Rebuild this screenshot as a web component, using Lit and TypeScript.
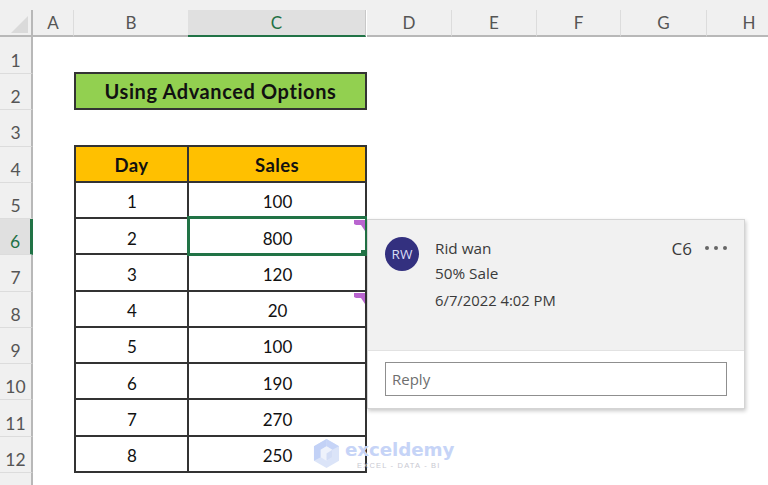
import { LitElement, html, css, svg } from "lit";
import { customElement } from "lit/decorators.js";

const cols = ["A", "B", "C", "D", "E", "F", "G", "H"];
const rows = [1, 2, 3, 4, 5, 6, 7, 8, 9, 10, 11, 12];
const data: [string, string][] = [
  ["1", "100"], ["2", "800"], ["3", "120"], ["4", "20"],
  ["5", "100"], ["6", "190"], ["7", "270"], ["8", "250"],
];

@customElement("app-root")
export class AppRoot extends LitElement {
  static styles = css`
    :host { display: block; width: 768px; height: 485px; overflow: hidden; position: relative; background: #fff; font-family: Lato, "Liberation Sans", sans-serif; color: #111; }
    .strip { height: 10px; background: #f0f0f0; }
    .sheet { display: grid; grid-template-columns: 33px 41px 115px 178px 85px 85px 84px 86px 85px; grid-template-rows: 27px 37px repeat(11, 36.27px) 13px; }
    .corner { background: #f0f0f0; border-right: 2px solid #b8b8b8; border-bottom: 2px solid #b8b8b8; position: relative; }
    .corner svg { position: absolute; left: 11px; top: 6px; }
    .ch { background: #f0f0f0; border-bottom: 2px solid #b8b8b8; border-right: 1px solid #dcdcdc; display: flex; align-items: center; justify-content: center; font-size: 17px; color: #555; box-sizing: border-box; }
    .ch.on { background: #e0e0e0; color: #1f7145; border-bottom: 2px solid #217346; border-right: 1px solid #c8c8c8; margin: 0 1px 0 -1px; }
    .rh { grid-column: 1; background: #f0f0f0; border-right: 2px solid #b8b8b8; border-bottom: 1px solid #dcdcdc; display: flex; align-items: center; justify-content: center; font-size: 17.5px; color: #555; box-sizing: border-box; padding-top: 10px; }
    .rh.on { background: #e0e0e0; color: #1f7145; border-right: 3px solid #217346; }
    .cell { display: flex; align-items: center; justify-content: center; font-size: 17px; box-sizing: border-box; border-right: 2px solid #333; border-bottom: 2px solid #333; padding: 4px 0 0 1px; color: #111; }
    .cell.b { grid-column: 3; border-left: 2px solid #333; }
    .cell.c { grid-column: 4; position: relative; }
    .head { background: #ffc000; font-weight: 700; font-size: 18.5px; letter-spacing: 0.4px; border-top: 2px solid #333; margin-top: -2px; padding: 2px 0 0 0; }
    .banner { grid-column: 3 / 5; grid-row: 3; display: flex; align-items: center; justify-content: center; background: #92d050; border: 2px solid #333; font-weight: 700; font-size: 20px; color: #111; box-sizing: border-box; letter-spacing: 0.6px; margin-top: -2px; }
    .cell.sel::after { content: ""; position: absolute; inset: -3px -2px -3px -2px; border: solid #217346; border-width: 3px 2px 3px 3px; z-index: 1; }
    .handle { position: absolute; right: -2px; bottom: -3px; width: 6px; height: 6px; background: #217346; z-index: 2; }
    .flag { position: absolute; right: 0; top: 1px; z-index: 2; }
    .card { position: absolute; left: 367px; top: 219px; width: 378px; height: 190px; box-sizing: border-box; background: #fff; border: 1px solid #d4d4d4; box-shadow: 1px 2px 4px rgba(0,0,0,.22); display: flex; flex-direction: column; font-family: "Open Sans", "Noto Sans", sans-serif; z-index: 3; }
    .top { flex: 0 0 131px; background: #f1f1f1; border-bottom: 1px solid #e2e2e2; display: flex; padding: 17px 17px 0 17px; gap: 16px; box-sizing: border-box; }
    .avatar { width: 34px; height: 34px; border-radius: 50%; background: #33307f; color: #d8dcf4; display: flex; align-items: center; justify-content: center; font-size: 13.5px; flex: none; }
    .body { flex: 1; display: flex; flex-direction: column; font-size: 15.3px; color: #3a3a3a; line-height: 25px; margin-top: -1px; }
    .name { display: flex; align-items: center; }
    .ref { margin-left: auto; font-size: 17px; }
    .dots { display: flex; gap: 5px; margin: -2px 0 0 13px; }
    .dots i { width: 4px; height: 4px; border-radius: 50%; background: #666; }
    .date { font-size: 14.8px; margin-top: 2px; }
    .foot { flex: 1; display: flex; padding: 11px 17px 0; }
    .reply { flex: 1; height: 34px; box-sizing: border-box; border: 1px solid #8f8f8f; padding-left: 6px; font-size: 15px; line-height: 33px; color: #6e6e6e; }
    .mark { position: absolute; left: 313px; top: 438px; display: flex; gap: 5px; z-index: 2; }
    .word { display: flex; flex-direction: column; align-items: flex-start; font-family: "DejaVu Sans", sans-serif; padding-top: 2px; }
    .word b { font-size: 18.3px; line-height: 20px; color: #c6d4f7; font-weight: 700; letter-spacing: -.1px; }
    .word span { margin: 1px 0 0 12px; font-size: 7.5px; line-height: 9px; letter-spacing: 1.2px; color: #c9c9d2; font-family: "Liberation Sans", sans-serif; white-space: nowrap; }
  `;

  render() {
    const flag = svg`<path d="M0 0H11V11L7 5H2L0 4Z" fill="#b965cf"/>`;
    return html`
      <div class="strip"></div>
      <div class="sheet">
        <div class="corner"><svg width="17" height="17"><path d="M17 0V17H0Z" fill="#dadada"/></svg></div>
        ${cols.map((c, i) => html`<div class="ch ${c === "C" ? "on" : ""}" style="grid-column:${i + 2};grid-row:1">${c}</div>`)}
        ${rows.map((r) => html`<div class="rh ${r === 6 ? "on" : ""}" style="grid-row:${r + 1}">${r}</div>`)}
        <div class="rh" style="grid-row:14"></div>
        <div class="banner">Using Advanced Options</div>
        <div class="cell b head" style="grid-row:5">Day</div>
        <div class="cell c head" style="grid-row:5">Sales</div>
        ${data.map(([d, s], i) => html`
          <div class="cell b" style="grid-row:${i + 6}">${d}</div>
          <div class="cell c ${i === 1 ? "sel" : ""}" style="grid-row:${i + 6}">
            ${s}
            ${i === 1 ? html`<span class="handle"></span>` : ""}
            ${i === 1 || i === 3 ? html`<svg class="flag" width="11" height="11" viewBox="0 0 11 11">${flag}</svg>` : ""}
          </div>`)}
      </div>
      <div class="card">
        <div class="top">
          <div class="avatar">RW</div>
          <div class="body">
            <div class="name"><span>Rid wan</span><span class="ref">C6</span><span class="dots"><i></i><i></i><i></i></span></div>
            <div>50% Sale</div>
            <div class="date">6/7/2022 4:02 PM</div>
          </div>
        </div>
        <div class="foot"><div class="reply">Reply</div></div>
      </div>
      <div class="mark">
        <svg width="27" height="31" viewBox="0 0 28 32">
          <path d="M14 1L27 8.5V23.5L14 31L1 23.5V8.5Z" fill="#dbe4f8"/>
          <path d="M14 1L27 8.5L20 12L14 8.5Z" fill="#c6d4f7"/>
          <path d="M1 8.5L14 1V8.5L8 12V20L1 23.5Z" fill="#c2d1f6"/>
          <path d="M8 12L14 8.5L20 12V20L14 23.5L8 20Z" fill="#eef2fb"/>
          <path d="M14 16L20 12V20L14 23.5Z" fill="#d3ddf5"/>
        </svg>
        <div class="word"><b>exceldemy</b><span>EXCEL - DATA - BI</span></div>
      </div>
    `;
  }
}
